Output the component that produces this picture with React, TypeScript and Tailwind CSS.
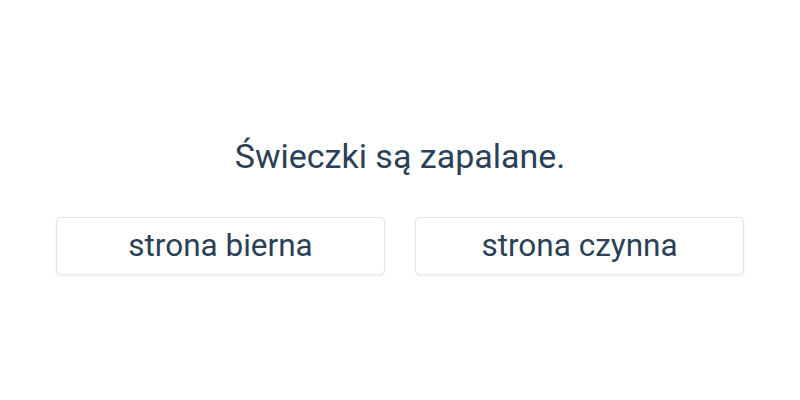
import React from "react";

const answers = ["strona bierna", "strona czynna"];

export default function App() {
    return (
        <div
            className="h-[400px] w-[800px] bg-white flex flex-col items-center pt-[136px] text-[#2b3f57]"
            style={{ fontFamily: "Roboto, 'Noto Sans', sans-serif" }}
        >
            <div className="text-[34px] leading-[40px]">Świeczki są zapalane.</div>

            <div className="mt-[41px] grid grid-cols-2 gap-[30px] w-full px-[56px]">
                {answers.map((a) => (
                    <button
                        key={a}
                        className="h-[58px] rounded-[5px] border border-[#e3e6ea] bg-white shadow-[0_1px_3px_rgba(0,0,0,0.08)] text-[31.5px]"
                    >
                        {a}
                    </button>
                ))}
            </div>
        </div>
    );
}
